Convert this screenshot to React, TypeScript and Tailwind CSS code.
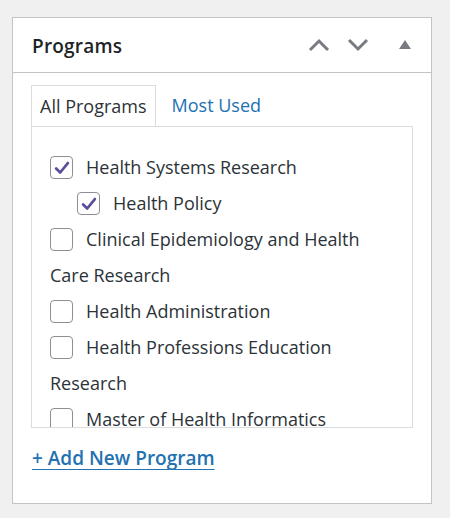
import { useState } from "react"

const programs = [
  { label: "Health Systems Research", checked: true, child: false },
  { label: "Health Policy", checked: true, child: true },
  { label: "Clinical Epidemiology and Health Care Research", checked: false, child: false },
  { label: "Health Administration", checked: false, child: false },
  { label: "Health Professions Education Research", checked: false, child: false },
  { label: "Master of Health Informatics", checked: false, child: false },
  { label: "Nursing", checked: false, child: false },
]

function Check({ checked, onChange }: { checked: boolean; onChange: () => void }) {
  return (
    <button
      type="button"
      onClick={onChange}
      className="inline-flex align-middle items-center justify-center w-[23px] h-[23px] mr-[13px] -mt-[3px] rounded-[4px] border border-[#8c8f94] bg-white"
    >
      {checked && (
        <svg width="18" height="18" viewBox="0 0 20 20">
          <path d="M3.5 10.5 L8 15 L16.5 4.5" fill="none" stroke="#5b4f9c" strokeWidth="3" strokeLinecap="round" strokeLinejoin="round" />
        </svg>
      )}
    </button>
  )
}

export default function App() {
  const [items, setItems] = useState(programs)
  const [tab, setTab] = useState(0)

  const toggle = (i: number) =>
    setItems((prev) => prev.map((p, j) => (j === i ? { ...p, checked: !p.checked } : p)))

  return (
    <div className="min-h-[518px] bg-[#f0f0f1] pt-[17px] pl-[12px] font-['Open_Sans',sans-serif] text-[#2c3338]">
      <div className="w-[420px] h-[487px] bg-white border border-[#c3c4c7]">
        {/* header */}
        <div className="flex items-center h-[55px] border-b border-[#c3c4c7] pt-[3px] pl-[19px] pr-[20px]">
          <h2 className="text-[19px] font-semibold text-[#1d2327] flex-1 tracking-[0.2px]">Programs</h2>
          <svg width="22" height="14" viewBox="0 0 22 14" className="mr-[17px] -mt-[3px]">
            <path d="M2 12 L11 3 L20 12" fill="none" stroke="#787c82" strokeWidth="3" />
          </svg>
          <svg width="22" height="14" viewBox="0 0 22 14" className="mr-[30px] -mt-[3px]">
            <path d="M2 2 L11 11 L20 2" fill="none" stroke="#787c82" strokeWidth="3" />
          </svg>
          <svg width="12" height="9" viewBox="0 0 12 9" className="-mt-[5px]">
            <path d="M6 0 L12 9 L0 9 Z" fill="#787c82" />
          </svg>
        </div>

        <div className="pt-[13px] pl-[18px] pr-[18px]">
          {/* tabs */}
          <div className="flex items-end h-[40px] relative z-10">
            <button
              onClick={() => setTab(0)}
              className={
                tab === 0
                  ? "h-[41px] px-[8px] border border-b-0 border-[#dcdcde] bg-white text-[18px] text-[#2c3338]"
                  : "h-[41px] px-[8px] text-[18px] text-[#2271b1]"
              }
            >
              All Programs
            </button>
            <button
              onClick={() => setTab(1)}
              className={
                tab === 1
                  ? "h-[41px] ml-[8px] px-[8px] border border-b-0 border-[#dcdcde] bg-white text-[18px] text-[#2c3338]"
                  : "h-[41px] ml-[8px] px-[8px] text-[18px] text-[#2271b1]"
              }
            >
              Most Used
            </button>
          </div>

          {/* list */}
          <div className="h-[302px] border border-[#dcdcde] overflow-hidden pt-[22px] pl-[18px] pr-[12px]">
            <ul className="text-[18px] leading-[36px] text-[#2c3338]">
              {items.map((p, i) => (
                <li key={p.label} className={p.child ? "pl-[27px]" : ""}>
                  <Check checked={p.checked} onChange={() => toggle(i)} />
                  {p.label}
                </li>
              ))}
            </ul>
          </div>

          <div className="mt-[16px] leading-[28px]">
            <a href="#" className="ml-px text-[19px] font-semibold text-[#2271b1] underline underline-offset-[4px] decoration-1">
              + Add New Program
            </a>
          </div>
        </div>
      </div>
    </div>
  )
}
